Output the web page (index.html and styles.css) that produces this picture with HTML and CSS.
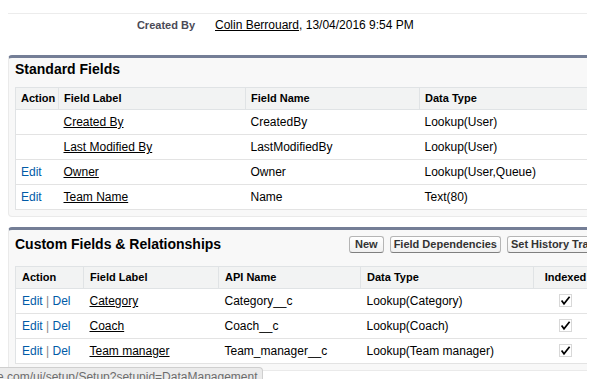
FILE: index.html
```html
<!DOCTYPE html>
<html lang="en">
<head>
    <meta charset="UTF-8">
    <title>Team - Fields</title>
    <link rel="stylesheet" href="styles.css">
</head>
<body>
    <div class="page">
        <div class="detail">
            <span class="detail-label">Created By</span>
            <span class="detail-value"><a href="#">Colin Berrouard</a>, 13/04/2016 9:54 PM</span>
        </div>

        <!-- Standard fields -->
        <div class="block">
            <div class="pb-header">
                <h2 class="pb-title">Standard Fields</h2>
            </div>
            <table class="list list-standard">
                <colgroup>
                    <col style="width: 43px">
                    <col style="width: 187px">
                    <col style="width: 174px">
                    <col>
                </colgroup>
                <thead>
                    <tr>
                        <th>Action</th>
                        <th>Field Label</th>
                        <th>Field Name</th>
                        <th>Data Type</th>
                    </tr>
                </thead>
                <tbody>
                    <tr>
                        <td></td>
                        <td><a href="#">Created By</a></td>
                        <td>CreatedBy</td>
                        <td>Lookup(User)</td>
                    </tr>
                    <tr>
                        <td></td>
                        <td><a href="#">Last Modified By</a></td>
                        <td>LastModifiedBy</td>
                        <td>Lookup(User)</td>
                    </tr>
                    <tr>
                        <td><a class="action-link" href="#">Edit</a></td>
                        <td><a href="#">Owner</a></td>
                        <td>Owner</td>
                        <td>Lookup(User,Queue)</td>
                    </tr>
                    <tr>
                        <td><a class="action-link" href="#">Edit</a></td>
                        <td><a href="#">Team Name</a></td>
                        <td>Name</td>
                        <td>Text(80)</td>
                    </tr>
                </tbody>
            </table>
        </div>

        <!-- Custom fields -->
        <div class="block">
            <div class="pb-header pb-header-buttons">
                <h2 class="pb-title pb-title-fixed">Custom Fields &amp; Relationships</h2>
                <div class="pb-buttons">
                    <button class="btn">New</button>
                    <button class="btn">Field Dependencies</button>
                    <button class="btn">Set History Tracking</button>
                </div>
            </div>
            <table class="list list-custom">
                <colgroup>
                    <col style="width: 68px">
                    <col style="width: 135px">
                    <col style="width: 142px">
                    <col style="width: 173px">
                    <col style="width: 64px">
                </colgroup>
                <thead>
                    <tr>
                        <th>Action</th>
                        <th>Field Label</th>
                        <th>API Name</th>
                        <th>Data Type</th>
                        <th class="center">Indexed</th>
                    </tr>
                </thead>
                <tbody>
                    <tr>
                        <td><a class="action-link" href="#">Edit</a><span class="sep"> | </span><a class="action-link" href="#">Del</a></td>
                        <td><a href="#">Category</a></td>
                        <td>Category__c</td>
                        <td>Lookup(Category)</td>
                        <td class="center"><svg class="check" width="13" height="13" viewBox="0 0 13 13"><rect x="0.5" y="0.5" width="12" height="12" fill="none" stroke="#b0b0b0" stroke-dasharray="1 1"/><path d="M2.6 6.6 L5 9.8 L10.6 2.8" fill="none" stroke="#000" stroke-width="1.7"/></svg></td>
                    </tr>
                    <tr>
                        <td><a class="action-link" href="#">Edit</a><span class="sep"> | </span><a class="action-link" href="#">Del</a></td>
                        <td><a href="#">Coach</a></td>
                        <td>Coach__c</td>
                        <td>Lookup(Coach)</td>
                        <td class="center"><svg class="check" width="13" height="13" viewBox="0 0 13 13"><rect x="0.5" y="0.5" width="12" height="12" fill="none" stroke="#b0b0b0" stroke-dasharray="1 1"/><path d="M2.6 6.6 L5 9.8 L10.6 2.8" fill="none" stroke="#000" stroke-width="1.7"/></svg></td>
                    </tr>
                    <tr>
                        <td><a class="action-link" href="#">Edit</a><span class="sep"> | </span><a class="action-link" href="#">Del</a></td>
                        <td><a href="#">Team manager</a></td>
                        <td>Team_manager__c</td>
                        <td>Lookup(Team manager)</td>
                        <td class="center"><svg class="check" width="13" height="13" viewBox="0 0 13 13"><rect x="0.5" y="0.5" width="12" height="12" fill="none" stroke="#b0b0b0" stroke-dasharray="1 1"/><path d="M2.6 6.6 L5 9.8 L10.6 2.8" fill="none" stroke="#000" stroke-width="1.7"/></svg></td>
                    </tr>
                </tbody>
            </table>
        </div>
    </div>

    <!-- browser status bubble -->
    <div class="status-bubble"><span>e.com/ui/setup/Setup?setupid=DataManagement</span></div>
</body>
</html>
```

FILE: styles.css
```css
/* General Styles */
html, body {
    height: 379px;
    overflow: hidden;
}
body {
    font-family: 'Liberation Sans', Arial, sans-serif;
    font-size: 12px;
    margin: 0;
    padding: 0;
    background-color: #fff;
    color: #000;
}
a {
    color: #000;
}
.page {
    width: 579px;
    margin-left: 8px;
    padding-top: 13px;
    overflow: hidden;
}

/* Detail row */
.detail {
    display: flex;
    border-top: 1px solid #ececec;
    padding-top: 3px;
    line-height: 16px;
    align-items: baseline;
}
.detail-label {
    width: 187px;
    text-align: right;
    font-size: 11px;
    font-weight: bold;
    color: #4a4a56;
}
.detail-value {
    padding-left: 20px;
}

/* Page blocks */
.block {
    width: 646px;
    margin-top: 22px;
    background-color: #f8f8f8;
    border: 1px solid #eaeaea;
    border-top: 3px solid #747e96;
    border-radius: 4px;
    padding: 0 6px 6px;
}
.block + .block {
    margin-top: 10px;
}
.pb-header {
    display: flex;
    height: 29px;
    padding-top: 3px;
    box-sizing: border-box;
    align-items: flex-start;
}
.pb-header-buttons {
    height: 36px;
    padding-top: 6px;
}
.pb-header-buttons > * {
    height: 17px;
}
.pb-title {
    margin: 0;
    font-size: 14px;
    line-height: 17px;
    font-weight: bold;
    color: #000;
}
.pb-title-fixed {
    width: 334px;
    flex-shrink: 0;
}
.pb-buttons {
    display: flex;
    gap: 6px;
    white-space: nowrap;
}
.btn {
    font-family: 'Liberation Sans', Arial, sans-serif;
    font-size: 11px;
    font-weight: bold;
    color: #333;
    height: 17px;
    padding: 0 3px;
    line-height: 15px;
    background: linear-gradient(#ffffff, #f0f0f0);
    border: 1px solid #b5b5b5;
    border-bottom-color: #7f7f7f;
    border-radius: 3px;
    flex-shrink: 0;
}
.btn:first-child {
    padding: 0 5px;
}

/* Lists */
.list {
    border-collapse: collapse;
    table-layout: fixed;
    background-color: #fff;
    border: 1px solid #e0e3e5;
    font-size: 12px;
}
.list-standard {
    width: 646px;
}
.list-custom {
    width: 582px;
}
.list th {
    background-color: #f2f3f3;
    border: 1px solid #e0e3e5;
    font-size: 11px;
    font-weight: bold;
    text-align: left;
    line-height: 21px;
    padding: 0 5px;
    white-space: nowrap;
    overflow: hidden;
}
.list td {
    border-bottom: 1px solid #e3e3e3;
    font-size: 12px;
    line-height: 24px;
    padding: 0 5px;
    white-space: nowrap;
    overflow: hidden;
}
.list-custom th, .list-custom td {
    padding: 0 6px;
}
.list .center {
    text-align: center;
}
.action-link {
    color: #015ba7;
    text-decoration: none;
}
.sep {
    color: #888;
}
.check {
    vertical-align: middle;
    position: relative;
    top: -1px;
}

/* Status bubble over the page */
.status-bubble {
    position: fixed;
    left: 0;
    top: 367px;
    width: 262px;
    height: 24px;
    background-color: #ebebeb;
    border-top: 1px solid #cfcfcf;
    border-right: 1px solid #cfcfcf;
    border-top-right-radius: 4px;
    overflow: hidden;
    white-space: nowrap;
    color: #6d6d6d;
    font-size: 12px;
    line-height: 14px;
    padding-top: 2px;
}
.status-bubble span {
    margin-left: -3px;
}
```
